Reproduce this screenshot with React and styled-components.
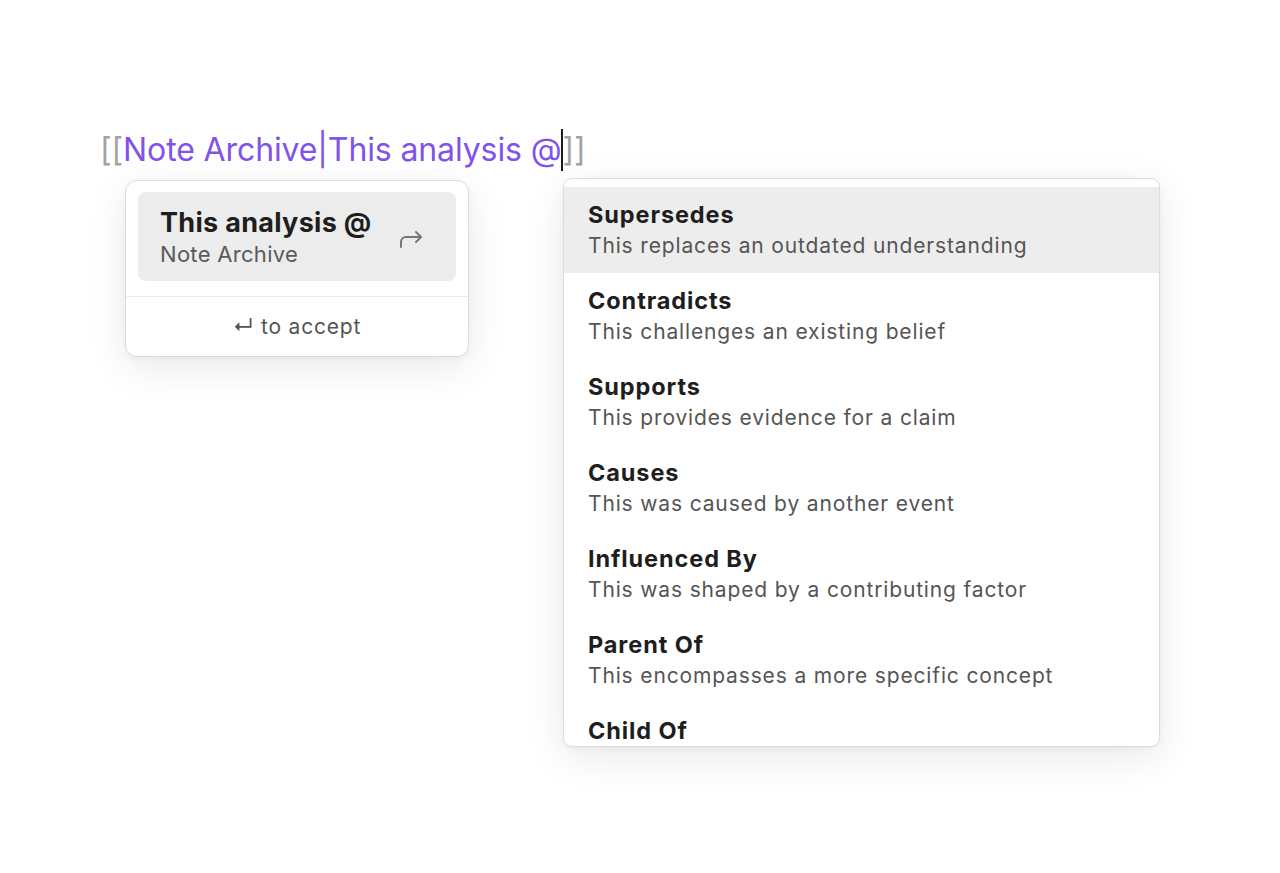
import React from 'react';
import styled, { createGlobalStyle } from 'styled-components';

const GlobalStyle = createGlobalStyle`
  html, body {
    margin: 0;
    padding: 0;
    background: #ffffff;
    font-family: Inter, "Noto Sans", "Liberation Sans", sans-serif;
    -webkit-font-smoothing: antialiased;
  }
`;

const Page = styled.div`
  width: 1280px;
  height: 873px;
  padding: 128px 0 0 100px;
  box-sizing: border-box;
`;

const EditorLine = styled.div`
  font-size: 32px;
  line-height: 44px;
  letter-spacing: -0.12px;
  white-space: nowrap;
  display: flex;
  align-items: center;
`;

const Bracket = styled.span`
  color: #a3a3a3;
`;

const LinkText = styled.span`
  color: #8153e8;
`;

const Caret = styled.span`
  display: inline-block;
  width: 2px;
  height: 42px;
  background: #1a1a1a;
  margin: 0 -1px 0 0;
`;

const Popups = styled.div`
  display: flex;
  align-items: flex-start;
  margin-top: 6px;
`;

const Card = styled.div`
  background: #ffffff;
  border: 1px solid #dcdcdc;
  border-radius: ${(p) => p.$radius || 12}px;
  box-shadow: 0 10px 40px rgba(0, 0, 0, 0.09), 0 2px 6px rgba(0, 0, 0, 0.04);
  box-sizing: border-box;
  overflow: hidden;
`;

const LinkCard = styled(Card)`
  width: 344px;
  margin-left: 25px;
  margin-top: 2px;
`;

const Suggestion = styled.div`
  margin: 11px 12px 15px;
  padding: 14px 22px 13px 22px;
  background: #ececec;
  border-radius: 8px;
  display: flex;
  align-items: center;
  justify-content: space-between;
`;

const SuggestTitle = styled.div`
  font-size: 27px;
  font-weight: 700;
  line-height: 34px;
  color: #1e1e1e;
  letter-spacing: 0.3px;
`;

const SuggestSub = styled.div`
  font-size: 22px;
  line-height: 28px;
  color: #5a5a5a;
  letter-spacing: 0.3px;
`;

const ArrowWrap = styled.div`
  margin-right: 10px;
  margin-top: 2px;
  color: #777;
  display: flex;
`;

const Divider = styled.div`
  height: 1px;
  background: #ececec;
`;

const Footer = styled.div`
  text-align: center;
  font-size: 21px;
  line-height: 28px;
  color: #555;
  letter-spacing: 0.8px;
  padding: 16px 0 15px;
`;

const RelCard = styled(Card)`
  width: 597px;
  height: 569px;
  margin-left: 94px;
  padding-top: 8px;
`;

const RelItem = styled.div`
  padding: 14px 24px 13px;
  background: ${(p) => (p.$active ? '#ededed' : 'transparent')};
`;

const RelTitle = styled.div`
  font-size: 23.5px;
  font-weight: 700;
  line-height: 28px;
  color: #1e1e1e;
  letter-spacing: 0.9px;
`;

const RelDesc = styled.div`
  font-size: 21px;
  line-height: 28px;
  color: #555;
  letter-spacing: 0.85px;
  margin-top: 3px;
`;

const relations = [
  ['Supersedes', 'This replaces an outdated understanding'],
  ['Contradicts', 'This challenges an existing belief'],
  ['Supports', 'This provides evidence for a claim'],
  ['Causes', 'This was caused by another event'],
  ['Influenced By', 'This was shaped by a contributing factor'],
  ['Parent Of', 'This encompasses a more specific concept'],
  ['Child Of', null],
];

function ForwardArrow() {
  return (
    <svg width="26" height="22" viewBox="0 0 26 22" fill="none" stroke="currentColor" strokeWidth="2" strokeLinecap="round" strokeLinejoin="round">
      <path d="M3 20 V15 a5 5 0 0 1 5 -5 H23" />
      <path d="M18 5 L23 10 L18 15" />
    </svg>
  );
}

export default function App() {
  return (
    <Page>
      <GlobalStyle />
      <EditorLine>
        <Bracket>[[</Bracket>
        <LinkText>Note Archive|This analysis @</LinkText>
        <Caret />
        <Bracket>]]</Bracket>
      </EditorLine>
      <Popups>
        <LinkCard>
          <Suggestion>
            <div>
              <SuggestTitle>This analysis @</SuggestTitle>
              <SuggestSub>Note Archive</SuggestSub>
            </div>
            <ArrowWrap>
              <ForwardArrow />
            </ArrowWrap>
          </Suggestion>
          <Divider />
          <Footer>↵ to accept</Footer>
        </LinkCard>
        <RelCard $radius={9}>
          {relations.map(([title, desc], i) => (
            <RelItem key={title} $active={i === 0}>
              <RelTitle>{title}</RelTitle>
              {desc && <RelDesc>{desc}</RelDesc>}
            </RelItem>
          ))}
        </RelCard>
      </Popups>
    </Page>
  );
}
